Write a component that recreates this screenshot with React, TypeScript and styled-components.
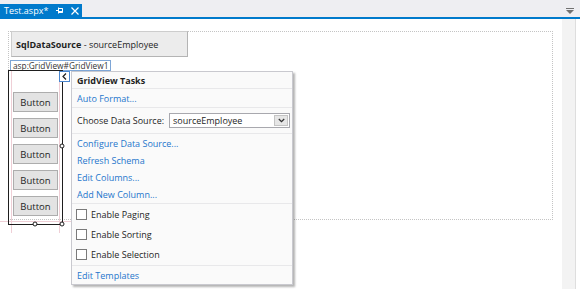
import React from 'react';
import styled, { createGlobalStyle } from 'styled-components';

const GlobalStyle = createGlobalStyle`
  html, body {
    margin: 0;
    padding: 0;
    background: #ffffff;
  }
  body {
    font-family: "Open Sans", "Noto Sans", sans-serif;
    font-size: 9px;
    color: #1e1e1e;
  }
  #root {
    width: 580px;
    height: 289px;
    overflow: hidden;
  }
`;

const Window = styled.div`
  width: 580px;
  height: 289px;
  display: flex;
  flex-direction: column;
  background: #eeeef2;
`;

const TabBar = styled.div`
  height: 17px;
  display: flex;
  align-items: flex-end;
  justify-content: space-between;
  border-bottom: 2px solid #007acc;
`;

const Tab = styled.div`
  height: 13px;
  width: 82px;
  background: #007acc;
  color: #ffffff;
  display: flex;
  align-items: center;
  padding-left: 4px;
  box-sizing: border-box;
  gap: 8px;
  font-size: 9px;
`;

const TabIcons = styled.div`
  display: flex;
  align-items: center;
  gap: 7px;
  svg {
    display: block;
  }
`;

const FilesMenu = styled.div`
  align-self: center;
  margin-right: 6px;
  margin-top: 4px;
  svg {
    display: block;
  }
`;

const Editor = styled.div`
  flex: 1;
  display: flex;
  background: #ffffff;
`;

const Surface = styled.div`
  flex: 1;
  position: relative;
`;

const Scrollbar = styled.div`
  width: 13px;
  background: #f3f3f3;
  border-right: 1px solid #dedede;
  margin-right: 4px;
`;

const DropZone = styled.div`
  position: absolute;
  left: 8px;
  top: 12px;
  width: 545px;
  height: 189px;
  box-sizing: border-box;
  border: 1px dotted #c4c4c4;
`;

const DataSource = styled.div`
  position: absolute;
  left: 11px;
  top: 12px;
  width: 177px;
  height: 26px;
  box-sizing: border-box;
  background: #ececec;
  border: 1px solid #cdcdcd;
  border-right-color: #b4b4b4;
  border-bottom-color: #b4b4b4;
  display: flex;
  align-items: center;
  padding-left: 4px;
  font-size: 9px;
  white-space: nowrap;

  b {
    font-weight: 700;
  }
`;

const ControlTag = styled.div`
  position: absolute;
  left: 10px;
  top: 41px;
  height: 11px;
  box-sizing: border-box;
  padding: 0 2px;
  border: 1px solid #7ea6d6;
  background: #ffffff;
  font-size: 8.3px;
  line-height: 9px;
  color: #333333;
  white-space: nowrap;
`;

const Grid = styled.div`
  position: absolute;
  left: 8px;
  top: 51px;
  width: 55px;
  height: 155px;
  box-sizing: border-box;
  border: 1px solid #1e1e1e;
  display: flex;
  flex-direction: column;
  gap: 6px;
  padding: 21px 0 0 4px;
`;

const GridButton = styled.div`
  width: 45px;
  height: 20px;
  box-sizing: border-box;
  background: #e3e3e3;
  border: 1px solid #adadad;
  display: flex;
  align-items: center;
  justify-content: center;
  font-size: 9.5px;
  color: #1e1e1e;
`;

const Guide = styled.div<{ $vertical?: boolean }>`
  position: absolute;
  background: #efcfd6;
  ${({ $vertical }) =>
    $vertical ? 'width: 1px; top: 51px; height: 163px;' : 'height: 1px; left: 0; width: 71px;'}
`;

const Handle = styled.div`
  position: absolute;
  width: 5px;
  height: 5px;
  box-sizing: border-box;
  border: 1px solid #1e1e1e;
  border-radius: 50%;
  background: #ffffff;
  transform: translate(-50%, -50%);
`;

const SmartTag = styled.div`
  position: absolute;
  left: 59px;
  top: 52px;
  width: 11px;
  height: 11px;
  box-sizing: border-box;
  border: 1px solid #4a86cf;
  background: #ffffff;
  display: flex;
  align-items: center;
  justify-content: center;
  svg {
    display: block;
  }
`;

const TaskPanel = styled.div`
  position: absolute;
  left: 71px;
  top: 52px;
  width: 222px;
  box-sizing: border-box;
  background: #fafafa;
  border: 1px solid #c9c9cf;
  box-shadow: 2px 2px 2px rgba(0, 0, 0, 0.3);
  display: flex;
  flex-direction: column;
  font-size: 9px;
  white-space: nowrap;
`;

const Section = styled.div<{ $height: number; $last?: boolean }>`
  height: ${({ $height }) => $height}px;
  box-sizing: border-box;
  display: flex;
  flex-direction: column;
  justify-content: center;
  padding: 0 5px;
  border-bottom: ${({ $last }) => ($last ? 'none' : '1px solid #e8e8ea')};
`;

const Title = styled.div`
  font-weight: 700;
  color: #1e1e1e;
`;

const TaskLink = styled.div`
  height: 17px;
  display: flex;
  align-items: center;
  color: #1e76cc;
`;

const ChooseRow = styled.div`
  display: flex;
  align-items: center;
  justify-content: space-between;
`;

const Select = styled.div`
  width: 121px;
  height: 15px;
  box-sizing: border-box;
  border: 1px solid #a8a8ae;
  background: #ffffff;
  display: flex;
  align-items: stretch;
  margin-right: -3px;
`;

const SelectValue = styled.div`
  flex: 1;
  padding-left: 3px;
  display: flex;
  align-items: center;
`;

const SelectButton = styled.div`
  width: 14px;
  margin: 1px;
  background: #e6e6e6;
  border: 1px solid #c4c4c4;
  box-sizing: border-box;
  display: flex;
  align-items: center;
  justify-content: center;
  svg {
    display: block;
  }
`;

const CheckRow = styled.label`
  height: 20px;
  display: flex;
  align-items: center;
  gap: 4px;
  margin-left: -1px;
`;

const CheckBox = styled.span`
  width: 11px;
  height: 11px;
  box-sizing: border-box;
  border: 1px solid #7a7a7a;
  background: #ffffff;
`;

const buttons = ['Button', 'Button', 'Button', 'Button', 'Button'];
const links = ['Configure Data Source...', 'Refresh Schema', 'Edit Columns...', 'Add New Column...'];
const options = ['Enable Paging', 'Enable Sorting', 'Enable Selection'];

const App = () => {
  return (
    <>
      <GlobalStyle />
      <Window>
        <TabBar>
          <Tab>
            <span>Test.aspx*</span>
            <TabIcons>
              <svg width="8" height="7" viewBox="0 0 8 7">
                <path d="M0 3.5H2.5M2.5 0.5V6.5M2.5 1.5H6.5V5.5H2.5M6.5 1.5V5.5M2.5 4.5H6.5" stroke="#fff" strokeWidth="1" fill="none" />
              </svg>
              <svg width="8" height="8" viewBox="0 0 8 8">
                <path d="M0.5 0.5L7.5 7.5M7.5 0.5L0.5 7.5" stroke="#fff" strokeWidth="1.2" />
              </svg>
            </TabIcons>
          </Tab>
          <FilesMenu>
            <svg width="8" height="6" viewBox="0 0 8 6">
              <rect x="0" y="0" width="8" height="1" fill="#717171" />
              <path d="M0 2H8L4 6Z" fill="#717171" />
            </svg>
          </FilesMenu>
        </TabBar>
        <Editor>
          <Surface>
            <DropZone />
            <DataSource>
              <b>SqlDataSource</b>&nbsp;- sourceEmployee
            </DataSource>
            <Guide $vertical style={{ left: 11 }} />
            <Guide $vertical style={{ left: 59 }} />
            <Guide style={{ top: 202 }} />
            <ControlTag>asp:GridView#GridView1</ControlTag>
            <Grid>
              {buttons.map((b, i) => (
                <GridButton key={i}>{b}</GridButton>
              ))}
            </Grid>
            <Handle style={{ left: 35, top: 205 }} />
            <Handle style={{ left: 62, top: 205 }} />
            <Handle style={{ left: 62, top: 127 }} />
            <SmartTag>
              <svg width="5" height="7" viewBox="0 0 5 7">
                <path d="M4 0.5L1 3.5L4 6.5" stroke="#1e1e1e" strokeWidth="1.2" fill="none" />
              </svg>
            </SmartTag>
            <TaskPanel>
              <Section $height={17}>
                <Title>GridView Tasks</Title>
              </Section>
              <Section $height={19}>
                <TaskLink>Auto Format...</TaskLink>
              </Section>
              <Section $height={26}>
                <ChooseRow>
                  <span>Choose Data Source:</span>
                  <Select>
                    <SelectValue>sourceEmployee</SelectValue>
                    <SelectButton>
                      <svg width="7" height="5" viewBox="0 0 7 5">
                        <path d="M0.8 1L3.5 3.7L6.2 1" stroke="#333" strokeWidth="1.3" fill="none" />
                      </svg>
                    </SelectButton>
                  </Select>
                </ChooseRow>
              </Section>
              <Section $height={70}>
                {links.map((l) => (
                  <TaskLink key={l}>{l}</TaskLink>
                ))}
              </Section>
              <Section $height={62}>
                {options.map((o) => (
                  <CheckRow key={o}>
                    <CheckBox />
                    <span>{o}</span>
                  </CheckRow>
                ))}
              </Section>
              <Section $height={18} $last>
                <TaskLink>Edit Templates</TaskLink>
              </Section>
            </TaskPanel>
          </Surface>
          <Scrollbar />
        </Editor>
      </Window>
    </>
  );
};

export default App;
